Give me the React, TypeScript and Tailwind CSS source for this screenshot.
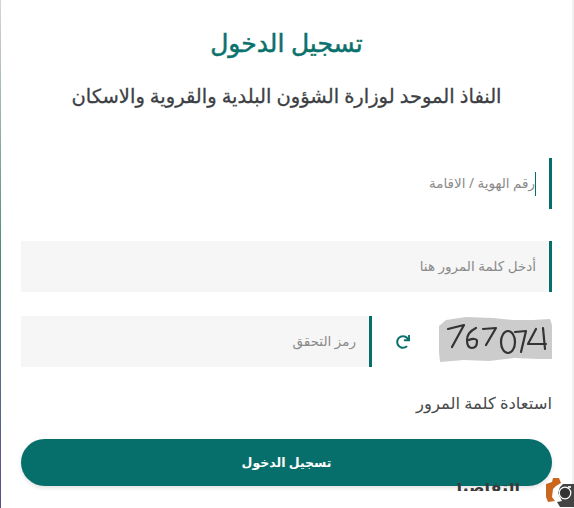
import { FaRedo } from "react-icons/fa";

const font = { fontFamily: '"Noto Sans", "DejaVu Sans", sans-serif' };

function Field({ placeholder, filled = true, caret = false }: { placeholder: string; filled?: boolean; caret?: boolean }) {
  return (
    <div className={`flex h-[51px] items-center border-r-[3px] border-[#076f6b] pr-[13px] ${filled ? "bg-[#f6f6f6]" : ""}`}>
      {caret && <span className="h-[24px] w-px bg-[#076f6b]" />}
      <span className="text-[13.5px] text-[#8a8a8a]">{placeholder}</span>
    </div>
  );
}

export default function App() {
  return (
    <div dir="rtl" style={font} className="relative h-[508px] w-[574px] overflow-hidden bg-white">
      <div className="absolute left-0 top-0 h-full w-px bg-gradient-to-b from-[#d8d4e0] via-[#4f8a78] to-[#5d4a94]" />
      <div className="absolute right-0 top-0 h-full w-[2px] bg-[#f1f1f1]" />

      <div className="flex h-full flex-col pl-[21px] pr-[22px]">
        <h1 className="mt-[23px] text-center text-[25px] font-normal leading-[38px] text-[#0b716d] [-webkit-text-stroke:0.5px_#0b716d]">تسجيل الدخول</h1>
        <h2 className="mt-[21px] text-center text-[19.5px] font-normal leading-[28px] text-[#3c3f44] [-webkit-text-stroke:0.3px_#3c3f44]">
          النفاذ الموحد لوزارة الشؤون البلدية والقروية والاسكان
        </h2>

        <div className="mt-[48px]">
          <Field placeholder="رقم الهوية / الاقامة" filled={false} caret />
        </div>
        <div className="mt-[32px]">
          <Field placeholder="أدخل كلمة المرور هنا" />
        </div>

        <div className="mt-[24px] flex items-start">
          <svg viewBox="0 0 113 46" className="mt-px h-[46px] w-[113px] shrink-0">
            <path d="M0 9 L7 3 L27 0 L54 1 L74 3 L94 3 L111 2 L113 8 L113 42 L100 42 L75 41 L50 44 L25 43 L1 45 L0 35 Z" fill="#cccccc" />
            <g fill="none" stroke="#333333" strokeWidth="2.2" strokeLinecap="round" strokeLinejoin="round">
              <path d="M9 12 L25 8 L13 30" />
              <path d="M37 11 C31 14 28 19 28 23 C28 28 30 31 33 31 C37 31 38 27 38 24 C38 22 34 21 30 23" />
              <path d="M44 12 L57 11 L47 28" />
              <ellipse cx="69" cy="25" rx="7" ry="11" />
              <path d="M76 15 L87 14 L82 35" />
              <path d="M97 12 L89 27 L107 27" />
              <path d="M104 11 L106 32" />
            </g>
          </svg>
          <div className="flex h-[51px] w-[67px] shrink-0 items-center justify-center pr-[6px]">
            <FaRedo className="h-[14px] w-[14px] text-[#0b716d]" />
          </div>
          <div className="flex h-[51px] flex-1 items-center border-r-[3px] border-[#076f6b] bg-[#f6f6f6] pr-[13px]">
            <span className="text-[13.5px] text-[#8a8a8a]">رمز التحقق</span>
          </div>
        </div>

        <div className="mt-[24px] text-[16.4px] leading-[24px] text-[#4a4a4a]">استعادة كلمة المرور</div>

        <button type="button" className="mt-[24px] h-[47px] w-full shrink-0 rounded-[24px] bg-[#076f6b] pt-[2px] text-[12.5px] font-bold text-white shadow-[0_2px_4px_rgba(0,0,0,0.12)]">
          تسجيل الدخول
        </button>
      </div>

      {/* heading under the button, cut off by the window */}
      <div className="absolute left-[455px] top-[483px] h-[8px] w-[65px] overflow-hidden">
        <div className="-mt-[6px] whitespace-nowrap text-center text-[16px] font-bold leading-[20px] text-[#3a3a3a]">التفاصيل</div>
      </div>

      <svg viewBox="0 0 30 30" className="absolute bottom-0 right-0 h-[30px] w-[30px]">
        <path d="M2 6 L8 4 L9 0 L15 0 L17 5 L12 8 L9 11 L8 19 L11 23 L4 24 L2 19 Z" fill="#c9661f" />
        <path d="M16 9 L19 6 L30 6 L30 29 L16 29 L13 24 L18 23 L14 15 Z" fill="#444444" />
        <circle cx="21" cy="15" r="5.8" fill="none" stroke="#ffffff" strokeWidth="1.2" />
        <circle cx="21" cy="15" r="4.5" fill="#333333" />
        <rect x="24" y="8" width="3" height="2" fill="#dddddd" />
      </svg>
    </div>
  );
}
